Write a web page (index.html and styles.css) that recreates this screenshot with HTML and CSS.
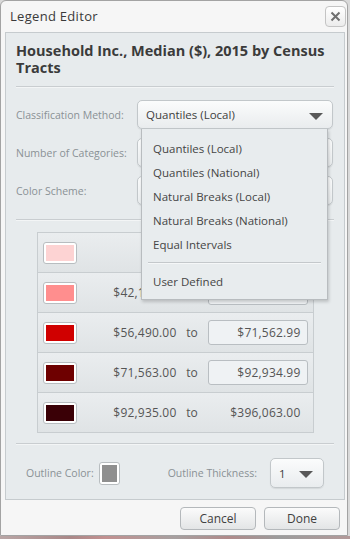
FILE: index.html
```html
<!DOCTYPE html>
<html lang="en">

<head>
    <meta charset="UTF-8">
    <title>Legend Editor</title>
    <link rel="stylesheet" href="styles.css">
</head>

<body>
    <div class="dialog">
        <div class="titlebar">
            <span class="title">Legend Editor</span>
            <button class="close" type="button">
                <svg width="11" height="11" viewBox="0 0 11 11"><path d="M1.5 1.5 L9.5 9.5 M9.5 1.5 L1.5 9.5" stroke="#6f6f6f" stroke-width="2" fill="none"/></svg>
            </button>
        </div>
        <div class="panel">
            <h2>Household Inc., Median ($), 2015 by Census Tracts</h2>
            <hr>
            <div class="fields">
                <div class="field">
                    <label>Classification Method:</label>
                    <div class="select">Quantiles (Local)<span class="arrow"></span></div>
                </div>
                <div class="field">
                    <label>Number of Categories:</label>
                    <div class="select">5<span class="arrow"></span></div>
                </div>
                <div class="field">
                    <label>Color Scheme:</label>
                    <div class="select"><span class="arrow"></span></div>
                </div>
                <!-- menu abierto sobre los campos -->
                <ul class="menu">
                    <li>Quantiles (Local)</li>
                    <li>Quantiles (National)</li>
                    <li>Natural Breaks (Local)</li>
                    <li>Natural Breaks (National)</li>
                    <li>Equal Intervals</li>
                    <li class="sep"></li>
                    <li>User Defined</li>
                </ul>
            </div>
            <hr>
            <table class="breaks">
                <tr>
                    <td class="sw"><span class="swatch"><i class="c1"></i></span></td>
                    <td class="from"></td>
                    <td class="to"></td>
                    <td class="upto"></td>
                </tr>
                <tr>
                    <td class="sw"><span class="swatch"><i class="c2"></i></span></td>
                    <td class="from">$42,124.00</td>
                    <td class="to"></td>
                    <td class="upto"><span class="box"></span></td>
                </tr>
                <tr>
                    <td class="sw"><span class="swatch"><i class="c3"></i></span></td>
                    <td class="from">$56,490.00</td>
                    <td class="to">to</td>
                    <td class="upto"><span class="box">$71,562.99</span></td>
                </tr>
                <tr>
                    <td class="sw"><span class="swatch"><i class="c4"></i></span></td>
                    <td class="from">$71,563.00</td>
                    <td class="to">to</td>
                    <td class="upto"><span class="box">$92,934.99</span></td>
                </tr>
                <tr>
                    <td class="sw"><span class="swatch"><i class="c5"></i></span></td>
                    <td class="from">$92,935.00</td>
                    <td class="to">to</td>
                    <td class="upto"><span class="plain">$396,063.00</span></td>
                </tr>
            </table>
            <hr>
            <div class="outline">
                <label>Outline Color:</label>
                <span class="swatch small"><i class="grey"></i></span>
                <label class="thick">Outline Thickness:</label>
                <div class="select tiny">1<span class="arrow"></span></div>
            </div>
        </div>
        <div class="buttons">
            <button type="button">Cancel</button>
            <button type="button">Done</button>
        </div>
    </div>
    <div class="map"></div>
</body>

</html>
```

FILE: styles.css
```css
body {
    margin: 0;
    font-family: "Open Sans", Arial, sans-serif;
    background: #d9d9d9;
    width: 350px;
    height: 539px;
    overflow: hidden;
}

.dialog {
    width: 346px;
    border: 1px solid #a3a3a3;
    border-radius: 6px 6px 0 0;
    background: #f6f6f6;
}

.titlebar {
    height: 31px;
    display: flex;
    align-items: center;
    justify-content: space-between;
    padding: 0 1px 0 9px;
}

.title {
    font-size: 13px;
    color: #3a3a3a;
    letter-spacing: 0.3px;
    margin-top: -1px;
}

.close {
    width: 21px;
    height: 21px;
    padding: 0;
    border: 1px solid #c4c4c4;
    border-radius: 4px;
    background: linear-gradient(#ffffff, #ececec);
    display: flex;
    align-items: center;
    justify-content: center;
    margin-top: -1px;
}

.panel {
    margin: 0 2px 0 4px;
    background: #e7ebed;
    border: 1px solid #c6cbce;
    padding: 9px 10px 11px 10px;
}

.panel h2 {
    margin: 0;
    font-family: "Open Sans", Arial, sans-serif;
    font-size: 14.5px;
    line-height: 17px;
    color: #3b3b3b;
    font-weight: bold;
}

.panel hr {
    border: none;
    border-top: 1px solid #c9cdd0;
    border-bottom: 1px solid #f3f5f6;
    margin: 0;
}

.panel h2 + hr {
    margin-top: 10px;
}

.fields {
    position: relative;
    margin: 12px 0 14px;
    display: flex;
    flex-direction: column;
    gap: 9px;
}

.field {
    display: flex;
    align-items: center;
}

label {
    font-size: 10.5px;
    color: #8a9195;
}

.field label {
    width: 121px;
}

.select {
    position: relative;
    width: 178px;
    height: 27px;
    border: 1px solid #c2c7ca;
    border-radius: 5px;
    background: linear-gradient(#fbfcfc, #e9ecee);
    box-shadow: 0 1px 1px rgba(0, 0, 0, 0.08);
    font-size: 11.5px;
    color: #3e3e3e;
    padding: 0 8px;
    display: flex;
    align-items: center;
}

.arrow {
    position: absolute;
    right: 9px;
    top: 12px;
    width: 0;
    height: 0;
    border-left: 7px solid transparent;
    border-right: 7px solid transparent;
    border-top: 7px solid #585858;
}

.menu {
    position: absolute;
    left: 125px;
    top: 29px;
    width: 185px;
    margin: 0;
    padding: 8px 0 5px;
    list-style: none;
    background: #e8ecee;
    border: 1px solid #b8bcbf;
    border-top: none;
    box-shadow: 1px 2px 3px rgba(0, 0, 0, 0.18);
    font-size: 11.5px;
    color: #454545;
    z-index: 2;
}

.menu li {
    height: 24px;
    line-height: 24px;
    padding-left: 11px;
}

.menu li.sep {
    height: 0;
    margin: 5px 6px 6px;
    border-top: 1px solid #c4c8cb;
    border-bottom: 1px solid #f5f7f8;
}

.breaks {
    margin: 11px auto 10px;
    width: 277px;
    border-collapse: collapse;
    font-size: 12px;
    color: #555;
}

.breaks tr {
    height: 40px;
    background: linear-gradient(#eaedef, #dfe3e5);
}

.breaks td {
    border-top: 1px solid #c8cdd0;
    border-bottom: 1px solid #c8cdd0;
    padding: 0;
}

.breaks td:first-child {
    border-left: 1px solid #c8cdd0;
}

.breaks td:last-child {
    border-right: 1px solid #c8cdd0;
}

.breaks .sw {
    width: 38px;
    padding-left: 5px;
}

.breaks .from {
    text-align: right;
    letter-spacing: 0.2px;
}

.breaks .to {
    width: 31px;
    text-align: center;
}

.breaks .upto {
    width: 100px;
    text-align: right;
    padding-right: 5px;
}

.box {
    display: inline-block;
    box-sizing: border-box;
    width: 100px;
    height: 25px;
    line-height: 23px;
    border: 1px solid #b9bec2;
    border-radius: 3px;
    background: #eff2f4;
    padding-right: 6px;
    letter-spacing: 0.2px;
    vertical-align: middle;
}

.plain {
    padding-right: 7px;
    letter-spacing: 0.2px;
}

.swatch {
    display: inline-block;
    padding: 2px;
    background: #fff;
    border: 1px solid #b8bdc0;
    border-radius: 3px;
    vertical-align: middle;
}

.swatch i {
    display: block;
    width: 28px;
    height: 16px;
}

.c1 { background: #fdd3d3; }
.c2 { background: #ff8e8e; }
.c3 { background: #d00000; }
.c4 { background: #6e0000; }
.c5 { background: #3a0006; }

.outline {
    margin-top: 13px;
    display: flex;
    align-items: center;
    padding-left: 10px;
}

.swatch.small {
    margin-left: 5px;
}

.swatch.small i {
    width: 15px;
    height: 17px;
}

.grey {
    background: #8f8f8f;
}

.thick {
    margin-left: 48px;
}

.select.tiny {
    width: 36px;
    height: 28px;
    margin-left: 13px;
}

.select.tiny .arrow {
    right: 10px;
}

.buttons {
    display: flex;
    justify-content: flex-end;
    gap: 8px;
    padding: 7px 7px 5px;
}

.buttons button {
    width: 76px;
    height: 23px;
    border: 1px solid #b4b8bb;
    border-radius: 4px;
    background: linear-gradient(#fbfbfb, #e3e5e6);
    font-family: "Open Sans", Arial, sans-serif;
    font-size: 12px;
    color: #404040;
    padding: 0;
}

.map {
    height: 4px;
    background: linear-gradient(90deg, #b9a6a6 0, #a88 20%, #c29090 30%, #a7a0a0 50%, #b08a8a 65%, #9c9c9c 80%, #b39999 100%);
}
```
